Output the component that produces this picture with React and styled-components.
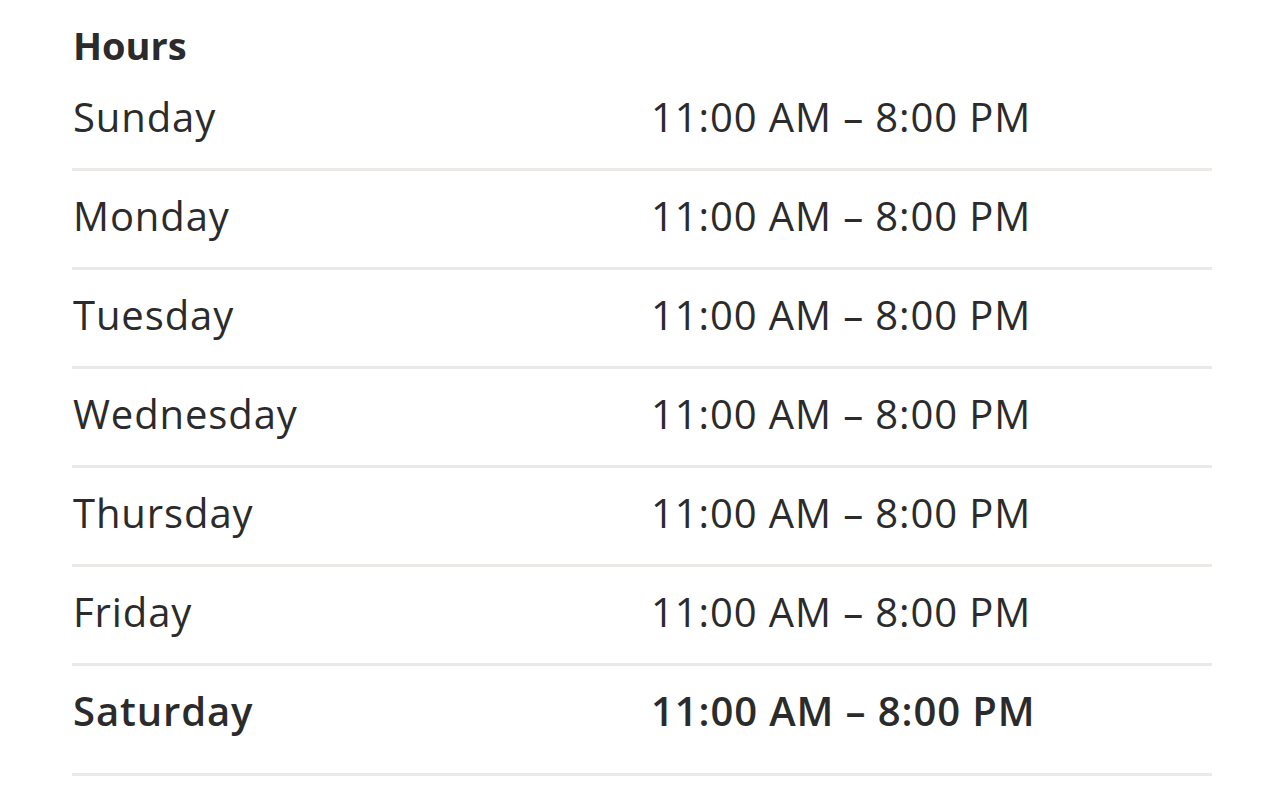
import styled, { createGlobalStyle } from "styled-components";

const GlobalStyle = createGlobalStyle`
  body {
    margin: 0;
    background: #ffffff;
    font-family: "Open Sans", "Liberation Sans", sans-serif;
    color: #2b2b2b;
  }
`;

const StyledSection = styled.section`
  width: 1140px;
  padding: 23px 0 0 72px;
`;

const StyledTitle = styled.h2`
  margin: 0 0 5px;
  font-size: 38px;
  line-height: 44px;
  font-weight: 700;
  padding-left: 1px;
`;

const StyledRow = styled.div`
  display: grid;
  grid-template-columns: 578px 1fr;
  align-items: center;
  padding: 21px 0 ${(p) => (p.$last ? "38px" : "27px")} 1px;
  border-bottom: 3px solid #ebe8e6;
  font-size: 40px;
  line-height: 48px;
  letter-spacing: 0.9px;
  font-weight: ${(p) => (p.$today ? 600 : 400)};
`;

const StyledDay = styled.span``;

const StyledTime = styled.span`
  white-space: nowrap;
`;

const hours = [
  { day: "Sunday", time: "11:00 AM – 8:00 PM" },
  { day: "Monday", time: "11:00 AM – 8:00 PM" },
  { day: "Tuesday", time: "11:00 AM – 8:00 PM" },
  { day: "Wednesday", time: "11:00 AM – 8:00 PM" },
  { day: "Thursday", time: "11:00 AM – 8:00 PM" },
  { day: "Friday", time: "11:00 AM – 8:00 PM" },
  { day: "Saturday", time: "11:00 AM – 8:00 PM", today: true },
];

function App() {
  return (
    <>
      <GlobalStyle />
      <StyledSection>
        <StyledTitle>Hours</StyledTitle>
        {hours.map((h, i) => (
          <StyledRow
            key={h.day}
            $today={h.today}
            $last={i === hours.length - 1}
          >
            <StyledDay>{h.day}</StyledDay>
            <StyledTime>{h.time}</StyledTime>
          </StyledRow>
        ))}
      </StyledSection>
    </>
  );
}

export default App;
